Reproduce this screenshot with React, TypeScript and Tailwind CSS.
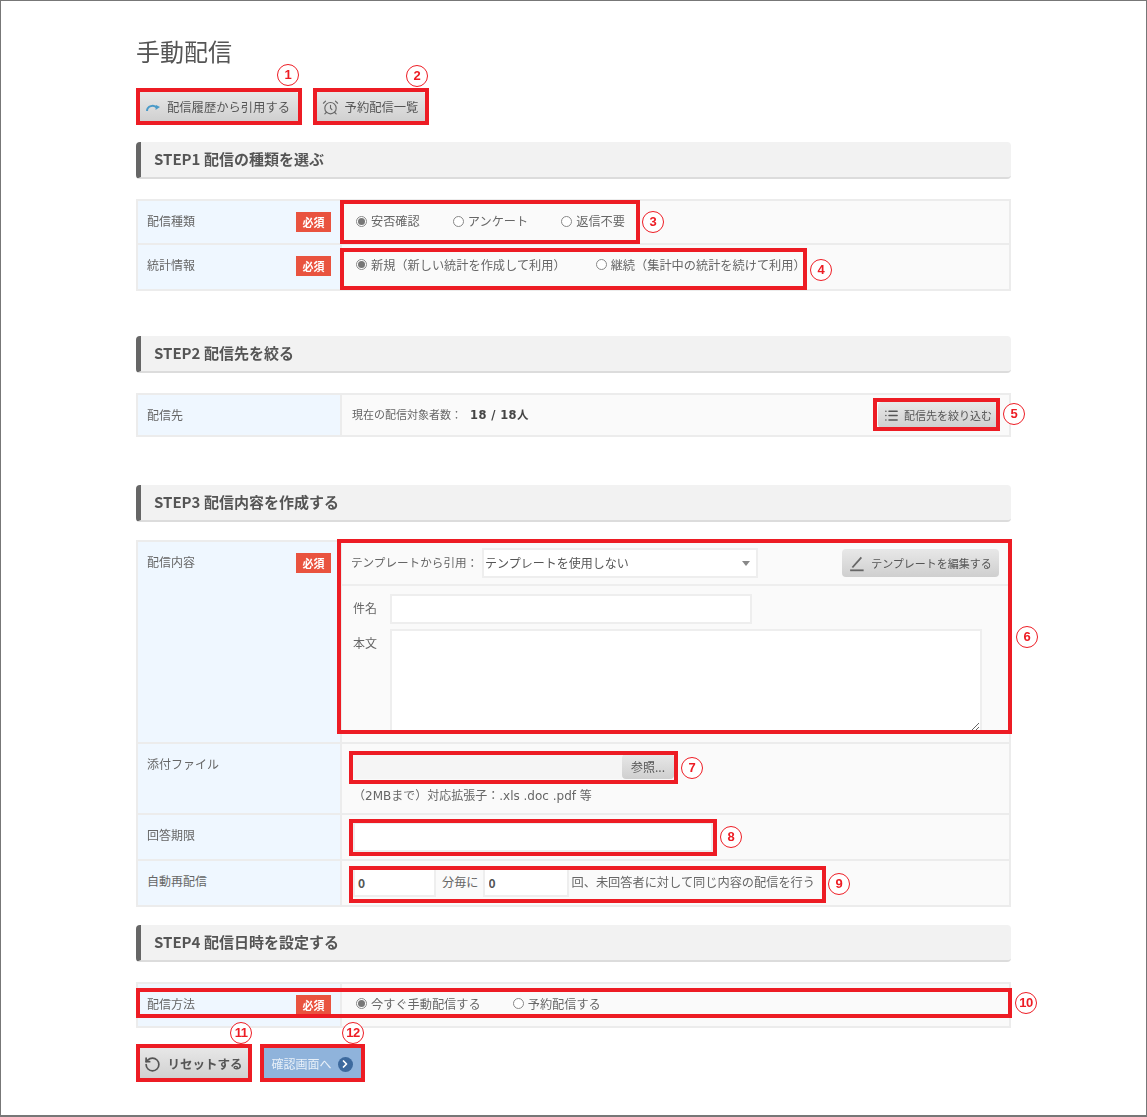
import { ReactNode } from "react";
import { AlarmClock, List, RotateCcw, ChevronRight } from "lucide-react";

const boxes = [
  { left: 136, top: 88, width: 166, height: 37 },
  { left: 313, top: 88, width: 116, height: 37 },
  { left: 340, top: 200, width: 300, height: 44 },
  { left: 340, top: 248, width: 467, height: 42 },
  { left: 873, top: 398, width: 127, height: 33 },
  { left: 337, top: 539, width: 675, height: 195 },
  { left: 349, top: 751, width: 329, height: 33 },
  { left: 349, top: 819, width: 368, height: 37 },
  { left: 349, top: 866, width: 477, height: 37 },
  { left: 136, top: 988, width: 876, height: 30 },
  { left: 136, top: 1044, width: 116, height: 38 },
  { left: 260, top: 1044, width: 105, height: 38 },
];

const marks = [
  { n: 1, x: 288, y: 75 },
  { n: 2, x: 417, y: 76 },
  { n: 3, x: 653, y: 222 },
  { n: 4, x: 821, y: 270 },
  { n: 5, x: 1014, y: 414 },
  { n: 6, x: 1027, y: 637 },
  { n: 7, x: 692, y: 768 },
  { n: 8, x: 731, y: 837 },
  { n: 9, x: 839, y: 884 },
  { n: 10, x: 1026, y: 1003 },
  { n: 11, x: 241, y: 1033 },
  { n: 12, x: 353, y: 1033 },
];

function Heading({ children, className }: { children: ReactNode; className: string }) {
  return (
    <div className={`flex h-[37px] items-center rounded-sm border-b-2 border-l-[5px] border-b-[#dcdcdc] border-l-[#666666] bg-[#f2f2f2] pl-[13px] text-[15px] font-bold text-[#555555] ${className}`}>
      {children}
    </div>
  );
}

function Badge() {
  return (
    <span className="flex h-[20px] w-[35px] items-center justify-center bg-[#e9533f] text-[11px] font-bold text-white">
      必須
    </span>
  );
}

function Row({ label, required, height, children, last }: { label: string; required?: boolean; height: string; children: ReactNode; last?: boolean }) {
  return (
    <div className={`flex ${height} ${last ? "" : "border-b-2 border-[#ececec]"}`}>
      <div className="flex w-[204px] shrink-0 items-start justify-between border-r-2 border-[#ececec] bg-[#eff7ff] pt-[11px] pr-[9px] pl-[9px]">
        <span className="text-[12px] leading-[18px] text-[#666666]">{label}</span>
        {required && <Badge />}
      </div>
      <div className="min-w-0 flex-1 bg-[#fafafa]">{children}</div>
    </div>
  );
}

function Radio({ label, on, className }: { label: string; on?: boolean; className?: string }) {
  return (
    <span className={`flex items-center gap-[4px] text-[12.2px] text-[#666666] ${className ?? ""}`}>
      <span className="flex h-[11px] w-[11px] items-center justify-center rounded-full border border-[#888888] bg-white">
        {on && <span className="h-[7px] w-[7px] rounded-full bg-[#777777]" />}
      </span>
      {label}
    </span>
  );
}

function GrayButton({ children, className }: { children: ReactNode; className: string }) {
  return (
    <div className={`flex items-center justify-center rounded-sm bg-gradient-to-b from-[#e8e8e8] to-[#cfcfcf] text-[#555555] ${className}`}>
      {children}
    </div>
  );
}

const field = "border-2 border-[#eeeeee] bg-white text-[12px] font-bold text-[#555555] outline-none";

export default function App() {
  return (
    <div
      className="relative h-[1117px] w-[1147px] overflow-hidden border border-b-2 border-[#777777] bg-white"
      style={{ fontFamily: '"Noto Sans CJK JP", "Liberation Sans", sans-serif' }}
    >
      <div className="box-content w-[875px] pt-[33px] pl-[135px] blur-[0.6px]">
        <h1 className="text-[24px] leading-[34px] text-[#555555]">手動配信</h1>

        <div className="mt-[24px] flex gap-[15px]">
          <GrayButton className="h-[30px] w-[163px] gap-[6px] text-[12.3px]">
            <svg width="16" height="12" viewBox="0 0 16 12" fill="none" stroke="#4a9ac8" strokeWidth="2">
              <path d="M2 10 C2 5 9 3 12 7" />
              <path d="M15 6 L10.5 9 L11 4 Z" fill="#4a9ac8" stroke="none" />
            </svg>
            配信履歴から引用する
          </GrayButton>
          <GrayButton className="h-[30px] w-[112px] gap-[6px] text-[12.3px]">
            <AlarmClock size={17} strokeWidth={1.6} color="#666666" />
            予約配信一覧
          </GrayButton>
        </div>

        <Heading className="mt-[20px]">STEP1 配信の種類を選ぶ</Heading>
        <div className="mt-[20px] border-2 border-[#ececec]">
          <Row label="配信種類" required height="h-[44px]">
            <div className="flex h-full items-center pb-[1px] pl-[14px]">
              <Radio label="安否確認" on />
              <Radio label="アンケート" className="ml-[33px]" />
              <Radio label="返信不要" className="ml-[33px]" />
            </div>
          </Row>
          <Row label="統計情報" required height="h-[44px]" last>
            <div className="flex h-full items-center pb-[4px] pl-[14px]">
              <Radio label="新規（新しい統計を作成して利用）" on />
              <Radio label="継続（集計中の統計を続けて利用）" className="ml-[30px]" />
            </div>
          </Row>
        </div>

        <Heading className="mt-[45px]">STEP2 配信先を絞る</Heading>
        <div className="mt-[20px] border-2 border-[#ececec]">
          <Row label="配信先" height="h-[40px]" last>
            <div className="flex h-full items-center justify-between pr-[11px] pl-[10px]">
              <span className="pt-[1px] text-[11px] text-[#666666]">
                現在の配信対象者数：
                <b
                  className="ml-[8px] text-[11.5px] tracking-[0.4px] text-[#444444]"
                  style={{ fontFamily: '"DejaVu Sans", "Noto Sans CJK JP", sans-serif' }}
                >
                  18 / 18人
                </b>
              </span>
              <GrayButton className="h-[26px] w-[120px] gap-[5px] text-[11px]">
                <List size={15} strokeWidth={2.4} color="#555555" />
                配信先を絞り込む
              </GrayButton>
            </div>
          </Row>
        </div>

        <Heading className="mt-[48px]">STEP3 配信内容を作成する</Heading>
        <div className="mt-[18px] border-2 border-[#ececec]">
          <Row label="配信内容" required height="h-[202px]">
            <div className="flex h-[44px] items-center border-b-2 border-[#eeeeee] pr-[10px] pl-[9px]">
              <span className="w-[131px] shrink-0 text-[11.6px] whitespace-nowrap text-[#666666]">テンプレートから引用：</span>
              <div className={`flex h-[30px] w-[276px] items-center justify-between pr-[6px] pl-[1px] ${field} font-normal text-[#444444]`}>
                テンプレートを使用しない
                <span className="h-0 w-0 border-x-[4px] border-t-[5px] border-x-transparent border-t-[#888888]" />
              </div>
              <GrayButton className="ml-auto h-[28px] w-[157px] gap-[4px] text-[11px]">
                <svg width="18" height="18" viewBox="0 0 16 16" fill="none" stroke="#666666" strokeWidth="1.6">
                  <path d="M3 12 L11 3" />
                  <path d="M1 14.5 H13" />
                </svg>
                テンプレートを編集する
              </GrayButton>
            </div>
            <div className="flex items-center pt-[8px] pl-[11px]">
              <span className="w-[37px] pb-[2px] text-[12px] text-[#666666]">件名</span>
              <input readOnly className={`h-[30px] w-[362px] ${field}`} />
            </div>
            <div className="flex items-start pt-[5px] pl-[11px]">
              <span className="w-[37px] pt-[5px] text-[12px] text-[#666666]">本文</span>
              <textarea readOnly className={`h-[104px] w-[592px] ${field}`} />
            </div>
          </Row>
          <Row label="添付ファイル" height="h-[71px]">
            <div className="flex pt-[10px] pl-[11px]">
              <div className="h-[25px] w-[269px] bg-[#f5f5f5]" />
              <GrayButton className="h-[25px] w-[52px] rounded-none text-[12px]">参照...</GrayButton>
            </div>
            <p
              className="pt-[8px] pl-[11px] text-[12px] leading-[18px] text-[#666666]"
              style={{ fontFamily: '"DejaVu Sans", "Noto Sans CJK JP", sans-serif' }}
            >
              （2MBまで）対応拡張子：.xls .doc .pdf 等
            </p>
          </Row>
          <Row label="回答期限" height="h-[46px]">
            <div className="pt-[7px] pl-[11px]">
              <input readOnly className={`h-[30px] w-[360px] ${field}`} />
            </div>
          </Row>
          <Row label="自動再配信" height="h-[44px]" last>
            <div className="flex h-full items-center pb-[2px] pl-[11px] text-[12.2px] text-[#666666]">
              <input readOnly value="0" className={`h-[29px] w-[83px] px-[3px] ${field}`} />
              <span className="mr-[4px] ml-[6px]">分毎に</span>
              <input readOnly value="0" className={`h-[29px] w-[86px] px-[4px] ${field}`} />
              <span className="ml-[3px] whitespace-nowrap">回、未回答者に対して同じ内容の配信を行う</span>
            </div>
          </Row>
        </div>

        <Heading className="mt-[18px]">STEP4 配信日時を設定する</Heading>
        <div className="mt-[20px] border-2 border-[#ececec]">
          <Row label="配信方法" required height="h-[42px]" last>
            <div className="flex h-full items-center pb-[2px] pl-[14px]">
              <Radio label="今すぐ手動配信する" on />
              <Radio label="予約配信する" className="ml-[32px]" />
            </div>
          </Row>
        </div>

        <div className="mt-[19px] flex gap-[12px]">
          <GrayButton className="h-[34px] w-[113px] gap-[6px] pl-[2px] text-[12.5px] font-bold">
            <RotateCcw size={17} strokeWidth={2.4} color="#555555" />
            リセットする
          </GrayButton>
          <div className="flex h-[34px] w-[102px] items-center justify-center gap-[6px] bg-[#8fb3db] text-[12px] text-[#e8f0f8]">
            確認画面へ
            <span className="flex h-[15px] w-[15px] items-center justify-center rounded-full bg-[#3d6a9e]">
              <ChevronRight size={12} strokeWidth={3.5} color="#ffffff" />
            </span>
          </div>
        </div>
      </div>

      {/* annotations on top of the screen capture */}
      {boxes.map((b, i) => (
        <div
          key={i}
          className="absolute border-4 border-[#ed1c24]"
          style={{ left: b.left - 1, top: b.top - 1, width: b.width, height: b.height }}
        />
      ))}
      {marks.map((m) => (
        <div
          key={m.n}
          className="absolute flex h-[22px] w-[22px] items-center justify-center rounded-full border-[1.5px] border-[#ed1c24] bg-white text-[13px] font-bold text-[#ed1c24]"
          style={{ left: m.x - 12, top: m.y - 12, fontFamily: '"Liberation Sans", sans-serif', letterSpacing: m.n > 9 ? "-0.5px" : undefined }}
        >
          {m.n}
        </div>
      ))}
    </div>
  );
}
